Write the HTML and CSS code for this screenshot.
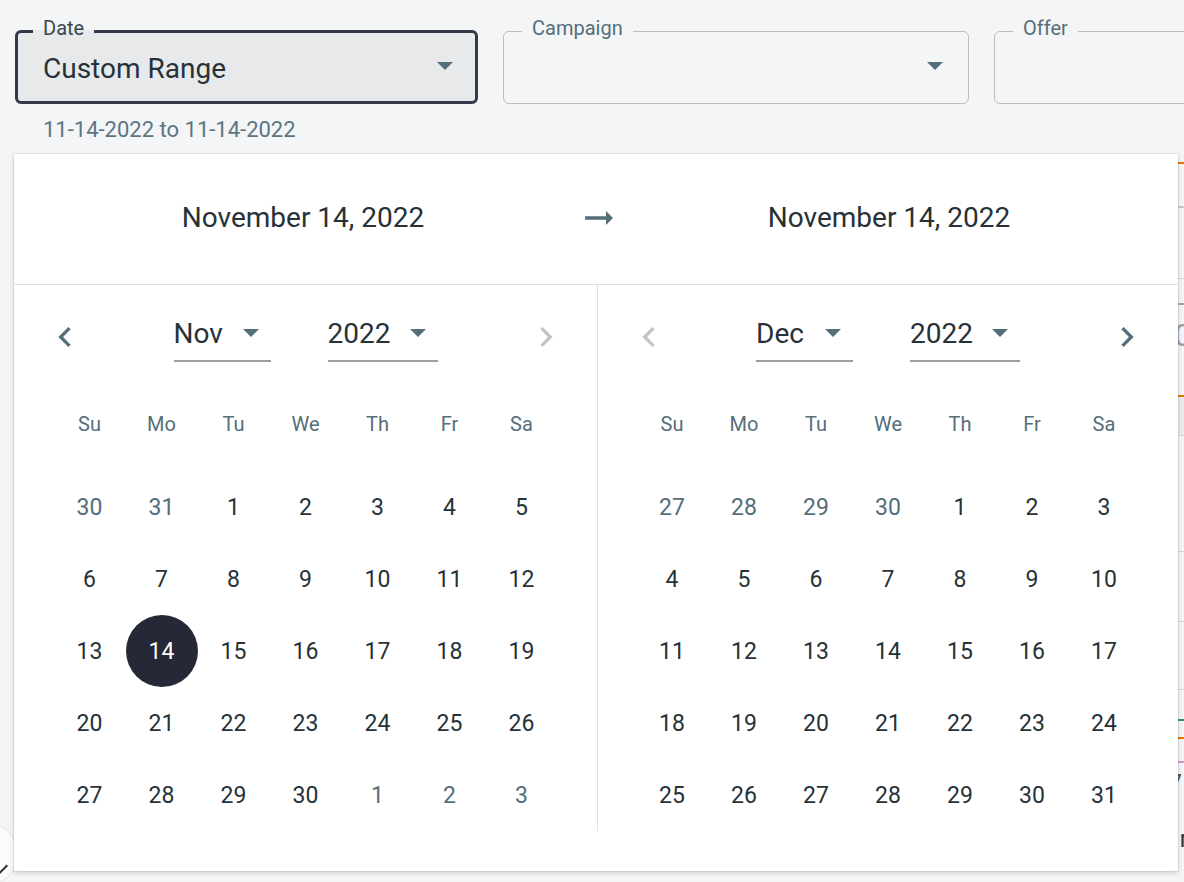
FILE: index.html
```html
<!DOCTYPE html>
<html lang="en">
<head>
<meta charset="utf-8">
<title>Date range</title>
<link rel="stylesheet" href="styles.css">
</head>
<body>
<div class="filters">
  <fieldset class="field field--date">
    <legend>Date</legend>
    <div class="field-body field-body--date">
      <span class="value">Custom Range</span>
      <svg class="caret" viewBox="7 10 10 5" width="16" height="8"><path d="M7 10l5 5 5-5z"/></svg>
    </div>
  </fieldset>
  <fieldset class="field field--campaign">
    <legend>Campaign</legend>
    <div class="field-body field-body--campaign">
      <span class="value"></span>
      <svg class="caret" viewBox="7 10 10 5" width="16" height="8"><path d="M7 10l5 5 5-5z"/></svg>
    </div>
  </fieldset>
  <fieldset class="field field--offer">
    <legend>Offer</legend>
    <div class="field-body"></div>
  </fieldset>
</div>
<div class="hint">11-14-2022 to 11-14-2022</div>

<div class="board">
  <div class="b-row b-orange h44"></div>
  <div class="b-row b-gray h72"></div>
  <div class="b-row b-gray-l h25"></div>
  <div class="b-row b-gray-d h92"><span class="b-big">0</span></div>
  <div class="b-row b-orange b-fill h40"></div>
  <div class="b-row b-gray-l h116"></div>
  <div class="b-row b-gray-l h70"></div>
  <div class="b-row b-gray-l h68"></div>
  <div class="b-row b-gray-l h30"></div>
  <div class="b-row b-green h18"></div>
  <div class="b-row b-orange h24"></div>
  <div class="b-row b-pink h90"><span class="b-num">7</span><span class="b-txt">r</span></div>
</div>

<div class="fab"><svg viewBox="0 0 24 24" width="24" height="24"><path d="M9 16.17L4.83 12l-1.42 1.41L9 19 21 7l-1.41-1.41z"/></svg></div>

<div class="picker">
  <div class="picker-head">
    <div class="head-date">November 14, 2022</div>
    <svg class="range-arrow" viewBox="4 8 16 8" width="28" height="14"><path d="M16.01 11H4v2h12.01v3L20 12l-3.99-4z"/></svg>
    <div class="head-date">November 14, 2022</div>
  </div>
  <div class="picker-body">
    <section class="month">
      <div class="nav">
        <svg class="chev" viewBox="0 0 24 24" width="40" height="40"><path d="M15.41 7.41L14 6l-6 6 6 6 1.41-1.41L10.83 12z"/></svg>
        <div class="selects">
          <div class="select select--month"><span>Nov</span><svg class="caret" viewBox="7 10 10 5" width="16" height="8"><path d="M7 10l5 5 5-5z"/></svg></div>
          <div class="select select--year"><span>2022</span><svg class="caret" viewBox="7 10 10 5" width="16" height="8"><path d="M7 10l5 5 5-5z"/></svg></div>
        </div>
        <svg class="chev chev--off" viewBox="0 0 24 24" width="40" height="40"><path d="M10 6L8.59 7.41 13.17 12l-4.58 4.59L10 18l6-6z"/></svg>
      </div>
      <div class="weekdays"><span>Su</span><span>Mo</span><span>Tu</span><span>We</span><span>Th</span><span>Fr</span><span>Sa</span></div>
      <div class="days">
        <span class="out">30</span><span class="out">31</span><span>1</span><span>2</span><span>3</span><span>4</span><span>5</span>
        <span>6</span><span>7</span><span>8</span><span>9</span><span>10</span><span>11</span><span>12</span>
        <span>13</span><span class="sel">14</span><span>15</span><span>16</span><span>17</span><span>18</span><span>19</span>
        <span>20</span><span>21</span><span>22</span><span>23</span><span>24</span><span>25</span><span>26</span>
        <span>27</span><span>28</span><span>29</span><span>30</span><span class="out">1</span><span class="out">2</span><span class="out">3</span>
      </div>
    </section>
    <section class="month month--right">
      <div class="nav">
        <svg class="chev chev--off" viewBox="0 0 24 24" width="40" height="40"><path d="M15.41 7.41L14 6l-6 6 6 6 1.41-1.41L10.83 12z"/></svg>
        <div class="selects">
          <div class="select select--month"><span>Dec</span><svg class="caret" viewBox="7 10 10 5" width="16" height="8"><path d="M7 10l5 5 5-5z"/></svg></div>
          <div class="select select--year"><span>2022</span><svg class="caret" viewBox="7 10 10 5" width="16" height="8"><path d="M7 10l5 5 5-5z"/></svg></div>
        </div>
        <svg class="chev" viewBox="0 0 24 24" width="40" height="40"><path d="M10 6L8.59 7.41 13.17 12l-4.58 4.59L10 18l6-6z"/></svg>
      </div>
      <div class="weekdays"><span>Su</span><span>Mo</span><span>Tu</span><span>We</span><span>Th</span><span>Fr</span><span>Sa</span></div>
      <div class="days">
        <span class="out">27</span><span class="out">28</span><span class="out">29</span><span class="out">30</span><span>1</span><span>2</span><span>3</span>
        <span>4</span><span>5</span><span>6</span><span>7</span><span>8</span><span>9</span><span>10</span>
        <span>11</span><span>12</span><span>13</span><span>14</span><span>15</span><span>16</span><span>17</span>
        <span>18</span><span>19</span><span>20</span><span>21</span><span>22</span><span>23</span><span>24</span>
        <span>25</span><span>26</span><span>27</span><span>28</span><span>29</span><span>30</span><span>31</span>
      </div>
    </section>
  </div>
</div>
</body>
</html>
```

FILE: styles.css
```css
* { box-sizing: border-box; }
html, body { margin: 0; height: 100%; }
body {
  background: #f4f5f7;
  font-family: Roboto, "Noto Sans", Arial, sans-serif;
  color: #263238;
  overflow: hidden;
  position: relative;
}

/* filter fields */
.filters {
  display: flex;
  gap: 25px;
  padding: 19px 0 0 15px;
  width: max-content;
}
.field {
  margin: 0;
  padding: 0;
  min-width: 0;
  border: 1px solid #bdbdbd;
  border-radius: 6px;
  width: 466px;
}
.field legend {
  font-size: 20px;
  line-height: 19px;
  padding: 0 10px 6px;
  margin-left: 18px;
  color: #546e7a;
}
.field--date {
  width: 463px;
  border: 3px solid #353849;
  background: #e8e9eb;
}
.field--date legend { margin-left: 15px; color: #37474f; }
.field-body {
  height: 59px;
  display: flex;
  align-items: center;
  justify-content: space-between;
  padding: 0 22px 9px 25px;
}
.field-body--date { height: 57px; }
.field-body--campaign { padding-right: 25px; padding-bottom: 11px; }
.field-body .caret { margin-bottom: 5px; }
.value { font-size: 28px; }
.caret { fill: #546e7a; display: block; flex: none; }

.hint {
  margin-top: 14px;
  padding-left: 43px;
  font-size: 22px;
  line-height: 24px;
  color: #5b7481;
}

/* background content visible at the edges */
.board {
  margin: 20px 0 0 620px;
}
.b-row { border-top: 2px solid #c8c8c8; position: relative; }
.b-orange { border-top-color: #e8710a; }
.b-gray { border-top-color: #c9c9c9; }
.b-gray-l { border-top: 1px solid #d6d6d6; }
.b-gray-d { border-top-color: #a5a5a5; }
.b-green { border-top-color: #1e9e76; }
.b-pink { border-top-color: #e58fc4; }
.b-fill { background: #ececec; }
.h18 { height: 18px; } .h24 { height: 24px; } .h25 { height: 25px; } .h30 { height: 30px; }
.h40 { height: 40px; } .h44 { height: 44px; } .h68 { height: 68px; } .h90 { height: 90px; }
.h70 { height: 70px; } .h72 { height: 72px; } .h92 { height: 92px; } .h116 { height: 116px; }
.b-big { position: absolute; right: -8px; top: 14px; font-size: 32px; line-height: 1; color: #9e9e9e; }
.b-num { position: absolute; right: 2px; top: 8px; font-size: 26px; line-height: 1; color: #555; }
.b-txt { position: absolute; right: -4px; top: 64px; font-size: 24px; line-height: 1; color: #333; }

.fab {
  position: absolute;
  left: -46px;
  top: 822px;
  width: 64px;
  height: 64px;
  border-radius: 50%;
  background: #fbfbfb;
  border: 1px solid #e4e4e4;
  display: flex;
  align-items: flex-end;
  justify-content: flex-end;
  padding: 0 6px 2px 0;
}
.fab svg { fill: #263238; }

/* date picker popover */
.picker {
  position: absolute;
  left: 14px;
  top: 154px;
  width: 1164px;
  background: #fff;
  padding-bottom: 40px;
  box-shadow: 0 2px 5px rgba(0, 0, 0, 0.16), 0 0 0 1px rgba(0, 0, 0, 0.05);
}
.picker-head {
  height: 131px;
  border-bottom: 1px solid #e0e0e0;
  display: grid;
  grid-template-columns: 1fr 8px 1fr;
  align-items: center;
  padding-bottom: 3px;
  font-size: 28px;
}
.head-date { text-align: center; }
.range-arrow { justify-self: center; margin: 0 -13px 0 -7px; fill: #546e7a; }

.picker-body { display: flex; }
.month { flex: 0 0 583px; }
.month--right { flex: 1; border-left: 1px solid #e0e0e0; }

.nav {
  margin-top: 24px;
  height: 56px;
  padding: 0 31px;
  display: flex;
  align-items: center;
  justify-content: space-between;
}
.chev { fill: #546e7a; display: block; }
.chev--off { fill: #c4c4c4; }
.selects { display: flex; gap: 57px; }
.select {
  height: 50px;
  display: flex;
  align-items: center;
  justify-content: space-between;
  padding: 0 12px 6px 0;
  border-bottom: 2px solid #9e9e9e;
  font-size: 28px;
}
.select--month { width: 97px; }
.select--year { width: 110px; }

.weekdays, .days {
  display: grid;
  grid-template-columns: repeat(7, 72px);
  justify-content: center;
}
.weekdays { margin-top: 23px; }
.weekdays span {
  height: 72px;
  display: flex;
  align-items: center;
  justify-content: center;
  font-size: 20px;
  color: #546e7a;
}
.days { margin-top: 11px; grid-auto-rows: 72px; }
.days span {
  display: flex;
  align-items: center;
  justify-content: center;
  font-size: 23px;
  color: #263238;
}
.days .out { color: #546e7a; }
.days .sel { background: #252836; color: #fff; border-radius: 50%; }
```
